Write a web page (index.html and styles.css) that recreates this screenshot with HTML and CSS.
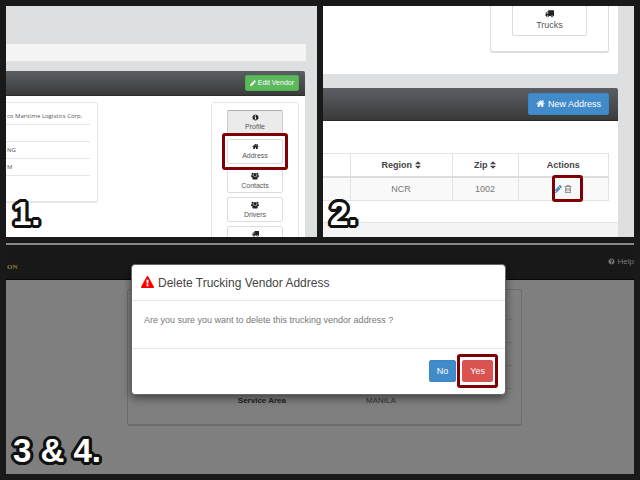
FILE: index.html
```html
<!DOCTYPE html>
<html lang="en">
<head>
<meta charset="utf-8">
<title>Delete a vendor address</title>
<link rel="stylesheet" href="styles.css">
</head>
<body>
<svg class="sprite" aria-hidden="true">
  <symbol id="home" viewBox="0 0 1792 1792"><path d="M1472 992v480q0 26-19 45t-45 19h-384v-384h-256v384h-384q-26 0-45-19t-19-45v-480q0-1 .5-3t.5-3l575-474 575 474q1 2 1 6zm223-69l-62 74q-8 9-21 11h-3q-13 0-21-7l-692-577-692 577q-12 8-24 7-13-2-21-11l-62-74q-8-10-7-23.5t11-21.5l719-599q32-26 76-26t76 26l244 204v-195q0-14 9-23t23-9h192q14 0 23 9t9 23v408l219 182q10 8 11 21.5t-7 23.5z"/></symbol>
  <symbol id="warning" viewBox="0 0 1792 1792"><path d="M1024 1375v-190q0-14-9.5-23.5t-22.5-9.5h-192q-13 0-22.5 9.5t-9.5 23.5v190q0 14 9.5 23.5t22.5 9.5h192q13 0 22.5-9.5t9.5-23.5zm-2-374l18-459q0-12-10-19-13-11-24-11h-220q-11 0-24 11-10 7-10 21l17 457q0 10 10 16.5t24 6.5h185q14 0 23.5-6.5t10.5-16.5zm-14-934l768 1408q35 63-2 126-17 29-46.5 46t-63.5 17h-1536q-34 0-63.5-17t-46.5-46q-37-63-2-126l768-1408q17-31 47-49t65-18 65 18 47 49z"/></symbol>
  <symbol id="question" viewBox="0 0 1792 1792"><path d="M1024 1376v-192q0-14-9-23t-23-9h-192q-14 0-23 9t-9 23v192q0 14 9 23t23 9h192q14 0 23-9t9-23zm256-672q0-88-55.5-163t-138.5-116-170-41q-243 0-371 213-15 24 8 42l132 100q7 6 19 6 16 0 25-12 53-68 86-92 34-24 86-24 48 0 85.5 26t37.5 59q0 38-20 61t-68 45q-63 28-115.5 86.5t-52.5 125.5v36q0 14 9 23t23 9h192q14 0 23-9t9-23q0-19 21.5-49.5t54.5-49.5q32-18 49-28.5t46-35 44.5-48 28-60.5 12.5-81zm384 192q0 209-103 385.5t-279.5 279.5-385.5 103-385.5-103-279.5-279.5-103-385.5 103-385.5 279.5-279.5 385.5-103 385.5 103 279.5 279.5 103 385.5z"/></symbol>
  <symbol id="info" viewBox="0 0 1792 1792"><path d="M1152 1376v-160q0-14-9-23t-23-9h-96v-512q0-14-9-23t-23-9h-320q-14 0-23 9t-9 23v160q0 14 9 23t23 9h96v320h-96q-14 0-23 9t-9 23v160q0 14 9 23t23 9h448q14 0 23-9t9-23zm-128-896v-160q0-14-9-23t-23-9h-192q-14 0-23 9t-9 23v160q0 14 9 23t23 9h192q14 0 23-9t9-23zm640 416q0 209-103 385.5t-279.5 279.5-385.5 103-385.5-103-279.5-279.5-103-385.5 103-385.5 279.5-279.5 385.5-103 385.5 103 279.5 279.5 103 385.5z"/></symbol>
  <symbol id="sort" viewBox="320 128 1152 1536"><path d="M1408 1088q0 26-19 45l-448 448q-19 19-45 19t-45-19l-448-448q-19-19-19-45t19-45 45-19h896q26 0 45 19t19 45zm0-384q0 26-19 45t-45 19h-896q-26 0-45-19t-19-45 19-45l448-448q19-19 45-19t45 19l448 448q19 19 19 45z"/></symbol>
  <symbol id="pencil" viewBox="128 128 1536 1536"><path d="M491 1536l91-91-235-235-91 91v107h128v128h107zm523-928q0-22-22-22-10 0-17 7l-542 542q-7 7-7 17 0 22 22 22 10 0 17-7l542-542q7-7 7-17zm-54-192l416 416-832 832h-416v-416zm683 96q0 53-37 90l-166 166-416-416 166-165q36-38 90-38 53 0 91 38l235 234q37 39 37 91z"/></symbol>
  <symbol id="trash" viewBox="128 128 1536 1536"><path d="M704 736v576q0 14-9 23t-23 9h-64q-14 0-23-9t-9-23v-576q0-14 9-23t23-9h64q14 0 23 9t9 23zm256 0v576q0 14-9 23t-23 9h-64q-14 0-23-9t-9-23v-576q0-14 9-23t23-9h64q14 0 23 9t9 23zm256 0v576q0 14-9 23t-23 9h-64q-14 0-23-9t-9-23v-576q0-14 9-23t23-9h64q14 0 23 9t9 23zm128 724v-948h-896v948q0 22 7 40.5t14.5 27 10.5 8.5h832q3 0 10.5-8.5t14.5-27 7-40.5zm-672-1076h448l-48-117q-7-9-17-11h-317q-10 2-17 11zm928 32v64q0 14-9 23t-23 9h-96v948q0 83-47 143.5t-113 60.5h-832q-66 0-113-58.5t-47-141.5v-952h-96q-14 0-23-9t-9-23v-64q0-14 9-23t23-9h309l70-167q15-37 54-63t79-26h320q40 0 79 26t54 63l70 167h309q14 0 23 9t9 23z"/></symbol>
  <symbol id="truck" viewBox="0 0 1792 1792"><path d="M640 1408q0-52-38-90t-90-38-90 38-38 90 38 90 90 38 90-38 38-90zm-384-512h384v-256h-158q-13 0-22 9l-195 195q-9 9-9 22v30zm1280 512q0-52-38-90t-90-38-90 38-38 90 38 90 90 38 90-38 38-90zm256-1088v1024q0 15-4 26.5t-13.5 18.5-16.5 11.5-23.5 6-22.5 2-25.5 0-22.5-.5q0 106-75 181t-181 75-181-75-75-181h-384q0 106-75 181t-181 75-181-75-75-181h-64q-3 0-22.5.5t-25.5 0-22.5-2-23.5-6-16.5-11.5-13.5-18.5-4-26.5q0-26 19-45t45-19v-320q0-8-.5-35t0-38 2.5-34.5 6.5-37 14-30.5 22.5-30l198-198q19-19 50.5-32t58.5-13h160v-192q0-26 19-45t45-19h1024q26 0 45 19t19 45z"/></symbol>
  <symbol id="users" viewBox="0 0 30 28"><circle cx="6" cy="6" r="4"/><circle cx="24" cy="6" r="4"/><circle cx="15" cy="9" r="6"/><path d="M0 15q0-5 3-5 3 2 5 1 1 3 3 5-4 0-6 3H3q-3 0-3-4zm30 0q0-5-3-5-3 2-5 1-1 3-3 5 4 0 6 3h2q3 0 3-4zM5 23q0-8 5-8 5 3 10 0 5 0 5 8 0 4-4 4H9q-4 0-4-4z"/></symbol>
</svg>
<main class="steps">
  <section class="step vendor">
    <div class="crumbs"></div>
    <header class="bar"><button class="btn green" type="button"><svg class="icon tiny"><use href="#pencil"/></svg> Edit Vendor</button></header>
    <div class="vendor-body">
      <ul class="facts">
        <li>co Maritime Logistics Corp.</li>
        <li></li>
        <li>NG</li>
        <li>M</li>
      </ul>
      <nav class="tabs">
        <button class="tab active" type="button"><svg class="icon small"><use href="#info"/></svg>Profile</button>
        <button class="tab marked" type="button"><svg class="icon small"><use href="#home"/></svg>Address</button>
        <button class="tab" type="button"><svg class="icon act"><use href="#users"/></svg>Contacts</button>
        <button class="tab" type="button"><svg class="icon act"><use href="#users"/></svg>Drivers</button>
        <button class="tab last" type="button" aria-label="Trucks"><svg class="icon small"><use href="#truck"/></svg></button>
      </nav>
    </div>
    <p class="number">1.</p>
  </section>

  <section class="step addresses">
    <div class="upper">
      <div class="upper-card"><button class="tab large" type="button"><svg class="icon"><use href="#truck"/></svg>Trucks</button></div>
    </div>
    <header class="bar tall"><button class="btn blue" type="button"><svg class="icon"><use href="#home"/></svg> New Address</button></header>
    <div class="list">
      <table>
        <colgroup><col class="c-rest"><col class="c-region"><col class="c-zip"><col class="c-actions"></colgroup>
        <thead><tr><th></th><th>Region <svg class="sort"><use href="#sort"/></svg></th><th>Zip <svg class="sort"><use href="#sort"/></svg></th><th>Actions</th></tr></thead>
        <tbody><tr><td></td><td>NCR</td><td>1002</td><td><span class="actions marked"><a class="edit" href="#" aria-label="Edit"><svg class="icon act"><use href="#pencil"/></svg></a><a href="#" aria-label="Delete"><svg class="icon act"><use href="#trash"/></svg></a></span></td></tr></tbody>
      </table>
    </div>
    <div class="foot"></div>
    <p class="number">2.</p>
  </section>

  <section class="step confirm">
    <header class="nav"><span class="brand">ON</span><a class="help" href="#"><svg class="icon small"><use href="#question"/></svg> Help</a></header>
    <div class="page">
      <dl class="details">
        <div></div><div></div><div></div><div></div>
        <div><dt>Service Area</dt><dd>MANILA</dd></div>
      </dl>
    </div>
    <div class="modal" role="dialog" aria-labelledby="modal-title">
      <h2 id="modal-title"><svg class="warn"><use href="#warning"/></svg>Delete Trucking Vendor Address</h2>
      <p class="question">Are you sure you want to delete this trucking vendor address ?</p>
      <div class="choices"><button class="btn blue" type="button">No</button><button class="btn red marked" type="button">Yes</button></div>
    </div>
    <p class="number">3 &amp; 4.</p>
  </section>
</main>
</body>
</html>
```
FILE: styles.css
```css
* { box-sizing: border-box; }
body {
  margin: 0;
  background: #191919;
  color: #777;
  font: 9px/12px "Liberation Sans", Arial, sans-serif;
}
.sprite { position: absolute; width: 0; height: 0; }
p, ul, dl, dd, h2 { margin: 0; padding: 0; }
button { font: inherit; margin: 0; }
a { color: inherit; text-decoration: none; }
.icon { width: 9px; height: 9px; fill: currentColor; vertical-align: -1px; }
.icon.act { width: 8px; height: 8px; }
.icon.small { width: 7px; height: 7px; }
.icon.tiny { width: 6px; height: 6px; }

.steps {
  display: grid;
  grid-template: 1fr 1fr / 1fr 1fr;
  gap: 6px;
  height: 100vh;
  min-height: 480px;
  padding: 6px;
}
.step {
  position: relative;
  display: flex;
  flex-direction: column;
  overflow: hidden;
  min-height: 0;
  background: #dedfe1;
}
.confirm { grid-column: 1 / -1; background: #7f7f7f; }

.number {
  position: absolute;
  left: 7px;
  bottom: 5px;
  color: #fff;
  font-size: 33px;
  font-weight: bold;
  line-height: 36px;
  text-shadow:
    3px 0 #111, -3px 0 #111, 0 3px #111, 0 -3px #111,
    2px 2px #111, -2px 2px #111, 2px -2px #111, -2px -2px #111,
    3px 1px #111, 3px -1px #111, -3px 1px #111, -3px -1px #111,
    1px 3px #111, -1px 3px #111, 1px -3px #111, -1px -3px #111;
}

.marked { position: relative; }
.marked::after {
  content: "";
  position: absolute;
  inset: -7px -6px;
  border: 3px solid #800006;
  border-radius: 3px;
}

.bar {
  display: flex;
  flex: none;
  align-items: center;
  justify-content: flex-end;
  height: 25px;
  margin-right: 12px;
  padding-right: 6px;
  border-bottom: 1px solid #2c2c2c;
  border-radius: 0 2px 0 0;
  background: linear-gradient(#5b5f65, #3a3a3a);
}
.bar.tall { height: 33px; margin-right: 16px; padding-right: 9px; }

.btn {
  height: 22px;
  padding: 0 7px;
  border: 1px solid;
  border-radius: 2px;
  color: #fff;
  white-space: nowrap;
}
.btn.green { height: 16px; padding: 0 4px; background: #5cb85c; border-color: #4cae4c; font-size: 7px; line-height: 12px; }
.btn.blue { background: #428bca; border-color: #3d86c6; }
.btn.red { background: #d9534f; border-color: #d9534f; }

/* Step 1 */
.crumbs { flex: none; height: 17px; margin: 38px 11px 10px 0; background: #f4f4f4; }
.vendor-body {
  display: flex;
  flex: 1;
  align-items: flex-start;
  justify-content: space-between;
  min-height: 0;
  margin-right: 12px;
  padding: 6px 6px 0 0;
  background: #fff;
}
.facts {
  width: 92px;
  height: 101px;
  padding: 5px 7px 0 0;
  border: 1px solid #e6e6e6;
  border-left: 0;
  border-bottom-width: 2px;
  border-radius: 0 3px 3px 0;
  list-style: none;
  font: 6px/12px "Open Sans", "Noto Sans", sans-serif;
  color: #555;
  white-space: nowrap;
}
.facts li { height: 17px; padding: 2px 0 0 1px; border-bottom: 1px solid #e6e6e6; }
.tabs {
  display: flex;
  flex-direction: column;
  gap: 4px;
  width: 88px;
  padding: 7px 15px;
  border: 1px solid #e6e6e6;
  border-radius: 3px;
}
.tab {
  display: flex;
  flex: none;
  flex-direction: column;
  align-items: center;
  justify-content: center;
  gap: 1px;
  height: 25px;
  padding: 0;
  border: 1px solid #ddd;
  border-radius: 2px;
  background: #fff;
  color: #555;
  font-size: 7px;
  line-height: 9px;
}
.tab .icon { color: #222; }
.tab.active { background: #ebebeb; border-color: #ccc; border-top-color: #aaa; }
.tab.last { justify-content: flex-start; padding-top: 3px; }

/* Step 2 */
.upper {
  flex: none;
  height: 68px;
  margin: 0 16px 14px 0;
  padding-right: 9px;
  border-radius: 0 0 2px 0;
  background: #fff;
}
.upper-card {
  width: 119px;
  height: 47px;
  margin-left: auto;
  padding: 0 21px;
  border: 1px solid #ddd;
  border-top: 0;
  border-bottom-width: 2px;
  border-radius: 0 0 3px 3px;
}
.tab.large { gap: 2px; width: 100%; height: 30px; padding-bottom: 2px; border-top: 0; border-radius: 0 0 2px 2px; font-size: 9px; line-height: 11px; }
.list { flex: 1; margin-right: 16px; padding: 32px 9px 0 0; background: #fff; }
table { width: 100%; border-collapse: collapse; table-layout: fixed; text-align: center; }
.c-rest { width: 27px; }
.c-region { width: 102px; }
.c-zip { width: 66px; }
th, td { height: 23px; padding: 0; border: 1px solid #e2e2e2; }
th:first-child, td:first-child { border-left: 0; }
th { border-bottom: 2px solid #ddd; color: #444; }
td { height: 24px; background: #f9f9f9; }
.sort { width: 6px; height: 8px; fill: #444; vertical-align: -1px; }
.actions { display: inline-flex; gap: 2px; }
.actions.marked::after { inset: -8px -11px -7px -2px; }
.edit { color: #428bca; }
.foot { flex: none; height: 15px; margin-right: 16px; border-top: 1px solid #e2e2e2; background: #f4f4f4; }

/* Steps 3 and 4 */
.nav {
  display: flex;
  flex: none;
  align-items: center;
  justify-content: space-between;
  height: 37px;
  border-top: 2px solid #888;
  border-bottom: 1px solid #080808;
  background: #181818;
  font-size: 8px;
}
.brand { padding: 10px 0 0 1px; color: #8f7a42; font: bold 7px/9px "Liberation Serif", serif; }
.page { padding: 9px 112px 0 121px; }
.details {
  height: 137px;
  padding: 7px 9px;
  border: 1px solid #6c6c6c;
  border-bottom-width: 2px;
  border-radius: 3px;
  color: #333;
  font-size: 8px;
}
.details div { display: flex; height: 23px; border-bottom: 1px solid #707070; }
.details div:last-child { padding-top: 6px; border: 0; }
dt { width: 149px; color: #222; font-weight: bold; text-align: right; white-space: nowrap; }
dd { margin-left: 80px; }
.modal {
  position: absolute;
  inset: 21px 128px auto 125px;
  border: 1px solid #666;
  border-radius: 4px;
  background: #fff;
  box-shadow: 0 3px 8px rgba(0, 0, 0, .5);
}
.modal h2 {
  display: flex;
  align-items: center;
  gap: 4px;
  height: 36px;
  padding-left: 9px;
  border-bottom: 1px solid #e5e5e5;
  color: #444;
  font-size: 12px;
  font-weight: normal;
}
.warn { width: 13px; height: 13px; fill: #f00; }
.question { height: 48px; padding: 13px 12px 0; border-bottom: 1px solid #e5e5e5; }
.choices { display: flex; gap: 6px; justify-content: flex-end; padding: 11px 12px 12px; }
```
